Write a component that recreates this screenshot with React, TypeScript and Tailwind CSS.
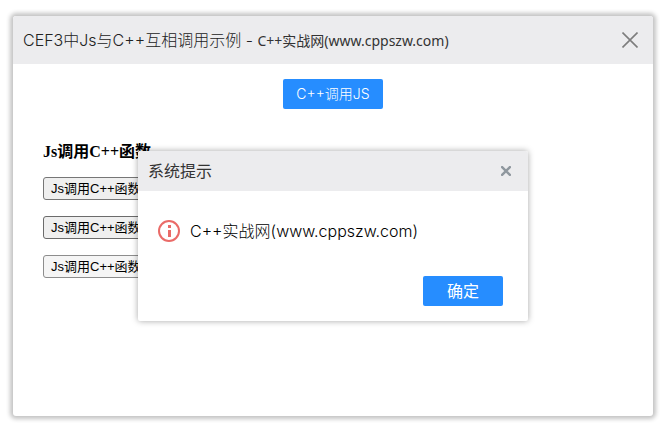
import React, { useState } from "react"

const callButtons = [
  { id: "login", className: "border-[#767676] bg-[#efefef]" },
  { id: "message", className: "border-[#6b6b6b] bg-[#efefef]" },
  { id: "result", className: "border-[#8d8d8d] bg-[#f5f5f5]" },
]

export default function App() {
  const [dialogOpen, setDialogOpen] = useState(true)

  const openDialog = () => setDialogOpen(true)
  const closeDialog = () => setDialogOpen(false)

  return (
    <div className="flex min-h-screen bg-white px-[13px] pt-4 pb-[13px] font-['Inter','Noto_Sans_CJK_SC',sans-serif] text-[#333]">
      <div className="relative flex flex-1 flex-col rounded-[3px] bg-white shadow-[0_0_4px_3px_#c4c4c4]">
        {/* Title bar */}
        <header className="flex h-12 items-center justify-between rounded-t-[3px] bg-[#ececee] pr-[15px] pl-[10px]">
          <h1 className="text-base font-light whitespace-nowrap text-[#222]">
            CEF3中Js与C++互相调用示例 - <span className="font-['Noto_Sans','Noto_Sans_CJK_SC',sans-serif] text-sm font-normal text-[#333]">C++实战网(www.cppszw.com)</span>
          </h1>
          <button aria-label="关闭" className="text-[#7d7d7d]">
            <svg width="16" height="16" viewBox="0 0 16 16" stroke="currentColor" strokeWidth="1.6">
              <path d="M0.5 0.5L15.5 15.5M15.5 0.5L0.5 15.5" />
            </svg>
          </button>
        </header>

        <main className="flex flex-col px-[30px] pt-[15px]">
          <button
            onClick={openDialog}
            className="h-[30px] w-[100px] self-center rounded-xs bg-[#268dff] text-sm font-light text-white"
          >
            C++调用JS
          </button>

          <h2 className="mt-[33px] mb-[15px] font-['Liberation_Serif','Noto_Sans_CJK_SC',serif] text-base leading-5 font-bold text-black">
            Js调用C++函数
          </h2>
          <div className="flex flex-col items-start gap-4">
            {callButtons.map((btn) => (
              <button
                key={btn.id}
                onClick={openDialog}
                className={`h-[23px] rounded-[3px] border px-[7px] font-['Liberation_Sans','Noto_Sans_CJK_SC',sans-serif] text-[13px] leading-5 text-black ${btn.className}`}
              >
                Js调用C++函数
              </button>
            ))}
          </div>
        </main>

        {/* System dialog */}
        {dialogOpen && (
          <div className="absolute inset-0 flex items-center justify-center pt-10">
            <div
              role="dialog"
              aria-labelledby="dialog-title"
              className="w-[390px] rounded-xs bg-white shadow-[0_0_6px_rgba(0,0,0,0.35)]"
            >
              <div className="flex h-10 items-center justify-between rounded-t-xs bg-[#ececee] pr-[17px] pl-[10px]">
                <h3 id="dialog-title" className="text-base">系统提示</h3>
                <button aria-label="关闭提示" onClick={closeDialog} className="text-[#8f979e]">
                  <svg width="10" height="10" viewBox="0 0 10 10" stroke="currentColor" strokeWidth="2.4">
                    <path d="M0.3 0.3L9.7 9.7M9.7 0.3L0.3 9.7" />
                  </svg>
                </button>
              </div>
              <div className="flex h-20 items-center gap-[10px] px-5">
                <svg width="22" height="22" viewBox="0 0 22 22" fill="none">
                  <circle cx="11" cy="11" r="10" stroke="#ea6b68" strokeWidth="2" />
                  <path d="M10 5h3v3h-3zM10 10h3v7h-3z" fill="#ea6b68" />
                </svg>
                <p className="text-base font-light text-black">C++实战网(www.cppszw.com)</p>
              </div>
              <div className="flex justify-end pt-[5px] pr-[25px] pb-[15px]">
                <button
                  onClick={closeDialog}
                  className="h-[30px] w-20 rounded-xs bg-[#268dff] text-base text-white"
                >
                  确定
                </button>
              </div>
            </div>
          </div>
        )}
      </div>
    </div>
  )
}
